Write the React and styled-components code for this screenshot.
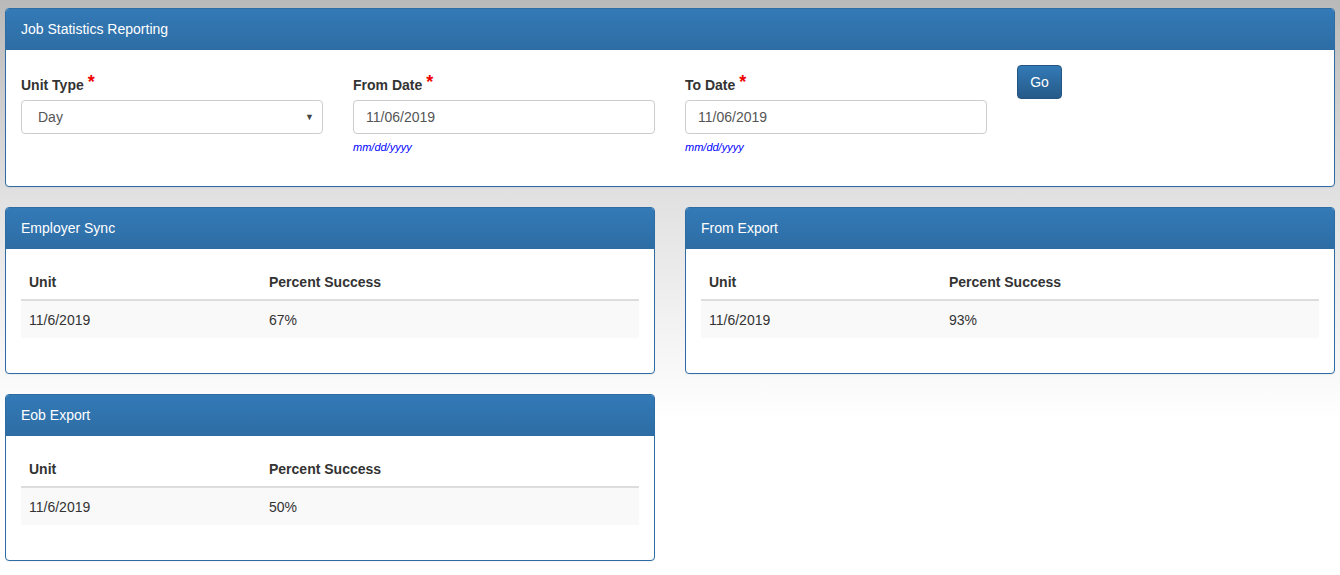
import React from "react";
import styled, { createGlobalStyle } from "styled-components";

const Global = createGlobalStyle`
  html, body { margin: 0; padding: 0; }
  body {
    font-family: "Liberation Sans", Arial, sans-serif;
    font-size: 14px;
    color: #333;
    background: linear-gradient(to bottom, #b9b9b9 0px, #e0e0e0 190px, #ffffff 420px, #ffffff 100%);
    min-height: 575px;
  }
`;

const Page = styled.div`
  padding: 8px 5px 0 5px;
  display: flex;
  flex-direction: column;
  gap: 20px;
`;

const Row = styled.div`
  display: grid;
  grid-template-columns: 650px 650px;
  gap: 30px;
  align-items: start;
`;

const Panel = styled.div`
  background: #fff;
  border: 1px solid #2e6da4;
  border-radius: 4px;
  box-shadow: 0 1px 1px rgba(0,0,0,0.05);
  overflow: hidden;
`;

const Heading = styled.div`
  height: 41px;
  box-sizing: border-box;
  padding: 0 15px;
  display: flex;
  align-items: center;
  color: #fff;
  background: linear-gradient(to bottom, #337ab7 0%, #2e6da4 100%);
  border-bottom: 1px solid #2e6da4;
  font-size: 14px;
`;

const Body = styled.div`
  padding: 15px 15px 15px 15px;
`;

const FormRow = styled.div`
  display: grid;
  grid-template-columns: repeat(4, 332px);
  padding-bottom: 15px;
`;

const Field = styled.div`
  padding-top: 7px;
  width: 302px;
`;

const Label = styled.label`
  display: block;
  font-weight: bold;
  line-height: 20px;
  margin-bottom: 5px;
`;

const Star = styled.span`
  color: #e00;
  font-size: 18px;
  margin-left: 4px;
  vertical-align: 2px;
`;

const Input = styled.div`
  height: 34px;
  box-sizing: border-box;
  border: 1px solid #ccc;
  border-radius: 4px;
  padding: 0 12px;
  display: flex;
  align-items: center;
  justify-content: space-between;
  color: #555;
  padding-left: ${p => (p.$select ? "16px" : "12px")};
`;

const Caret = styled.span`
  font-size: 9px;
  color: #444;
  margin-right: -4px;
`;

const Help = styled.div`
  margin-top: 5px;
  font-style: italic;
  font-size: 11px;
  color: #0000ff;
  line-height: 17px;
`;

const Button = styled.button`
  width: 45px;
  height: 34px;
  border: 1px solid #245580;
  border-radius: 4px;
  background: linear-gradient(to bottom, #337ab7 0%, #265a88 100%);
  color: #fff;
  font-family: inherit;
  font-size: 14px;
  cursor: pointer;
`;

const Table = styled.div`
  margin-bottom: 20px;
`;

const TRow = styled.div`
  display: grid;
  grid-template-columns: 240px 1fr;
  height: 37px;
  align-items: center;
  background: ${p => (p.$striped ? "#f9f9f9" : "transparent")};
  border-bottom: ${p => (p.$head ? "2px solid #ddd" : "none")};
  font-weight: ${p => (p.$head ? "bold" : "normal")};
  box-sizing: border-box;
  & > div { padding: 0 8px; }
`;

function StatPanel({ title, value }) {
  return (
    <Panel>
      <Heading>{title}</Heading>
      <Body>
        <Table>
          <TRow $head><div>Unit</div><div>Percent Success</div></TRow>
          <TRow $striped><div>11/6/2019</div><div>{value}</div></TRow>
        </Table>
      </Body>
    </Panel>
  );
}

export default function App() {
  return (
    <>
      <Global />
      <Page>
        <Panel>
          <Heading>Job Statistics Reporting</Heading>
          <Body>
            <FormRow>
              <Field>
                <Label>Unit Type<Star>*</Star></Label>
                <Input $select>Day<Caret>▼</Caret></Input>
              </Field>
              <Field>
                <Label>From Date<Star>*</Star></Label>
                <Input>11/06/2019</Input>
                <Help>mm/dd/yyyy</Help>
              </Field>
              <Field>
                <Label>To Date<Star>*</Star></Label>
                <Input>11/06/2019</Input>
                <Help>mm/dd/yyyy</Help>
              </Field>
              <div><Button>Go</Button></div>
            </FormRow>
          </Body>
        </Panel>
        <Row>
          <StatPanel title="Employer Sync" value="67%" />
          <StatPanel title="From Export" value="93%" />
        </Row>
        <Row>
          <StatPanel title="Eob Export" value="50%" />
        </Row>
      </Page>
    </>
  );
}
